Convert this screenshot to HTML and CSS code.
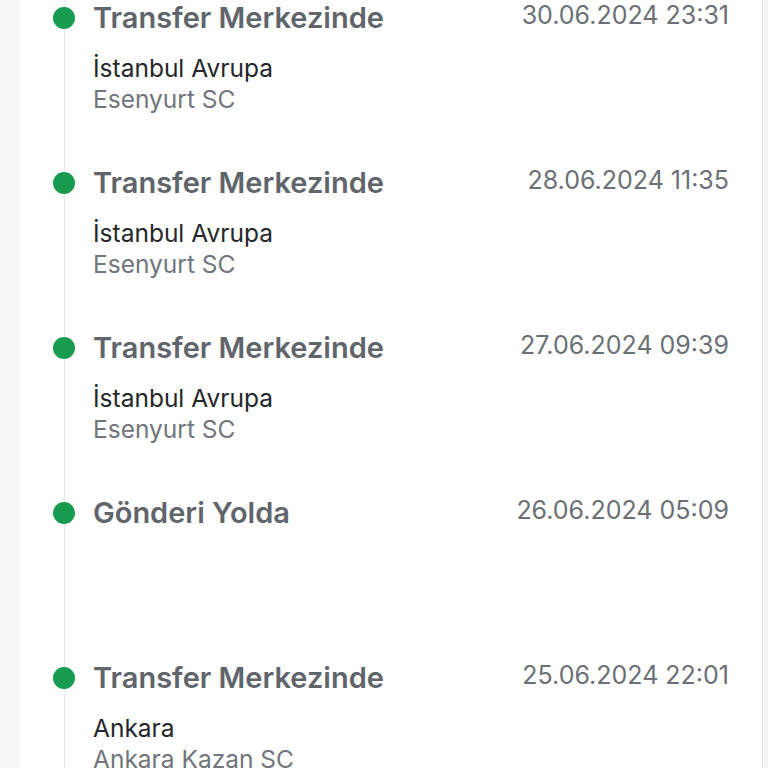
FILE: index.html
```html
<!DOCTYPE html>
<html lang="tr">
<head>
<meta charset="utf-8">
<title>Gönderi Hareketleri</title>
<link rel="stylesheet" href="styles.css">
</head>
<body>
<div class="page">
  <div class="gutter"></div>
  <main class="card">
    <ol class="timeline">
      <li class="event">
        <span class="dot"></span>
        <div class="body">
          <div class="head"><h3 class="status">Transfer Merkezinde</h3><time class="date">30.06.2024 23:31</time></div>
          <p class="city">İstanbul Avrupa</p>
          <p class="branch">Esenyurt SC</p>
        </div>
      </li>
      <li class="event">
        <span class="dot"></span>
        <div class="body">
          <div class="head"><h3 class="status">Transfer Merkezinde</h3><time class="date">28.06.2024 11:35</time></div>
          <p class="city">İstanbul Avrupa</p>
          <p class="branch">Esenyurt SC</p>
        </div>
      </li>
      <li class="event">
        <span class="dot"></span>
        <div class="body">
          <div class="head"><h3 class="status">Transfer Merkezinde</h3><time class="date">27.06.2024 09:39</time></div>
          <p class="city">İstanbul Avrupa</p>
          <p class="branch">Esenyurt SC</p>
        </div>
      </li>
      <li class="event">
        <span class="dot"></span>
        <div class="body">
          <div class="head"><h3 class="status">Gönderi Yolda</h3><time class="date">26.06.2024 05:09</time></div>
        </div>
      </li>
      <li class="event">
        <span class="dot"></span>
        <div class="body">
          <div class="head"><h3 class="status">Transfer Merkezinde</h3><time class="date">25.06.2024 22:01</time></div>
          <p class="city">Ankara</p>
          <p class="branch">Ankara Kazan SC</p>
        </div>
      </li>
    </ol>
  </main>
  <div class="gutter gutter-right"></div>
</div>
</body>
</html>
```

FILE: styles.css
```css
* { box-sizing: border-box; }
html, body { margin: 0; padding: 0; }
body {
  font-family: Inter, "Noto Sans", "Liberation Sans", sans-serif;
  background: #f4f5f7;
}
.page {
  display: flex;
  height: 768px;
  overflow: hidden;
}
.gutter {
  flex: 0 0 20px;
  background: #f4f5f7;
}
.gutter-right {
  flex: 1 1 auto;
}
.card {
  flex: 0 0 743px;
  background: #ffffff;
  border-right: 1px solid #e4e6e9;
  padding-right: 33px;
}
.timeline {
  list-style: none;
  margin: 0 0 0 44px;
  padding: 2px 0 0 0;
  border-left: 1px solid #e6e8eb;
  min-height: 100%;
}
.event {
  display: flex;
  align-items: flex-start;
  height: 165px;
  margin-left: -12px;
}
.dot {
  flex: 0 0 22px;
  width: 22px;
  height: 22px;
  margin-top: 5px;
  border-radius: 50%;
  background: #189b50;
}
.body {
  flex: 1 1 auto;
  margin-left: 18px;
}
.head {
  display: flex;
  justify-content: space-between;
  align-items: flex-start;
}
.status {
  margin: 0;
  font-size: 29px;
  line-height: 32px;
  font-weight: 600;
  color: #60646b;
}
.date {
  font-size: 25px;
  line-height: 27px;
  color: #6b6f76;
}
.city, .branch {
  margin: 0;
  font-size: 24.5px;
  line-height: 31px;
}
.city {
  margin-top: 19px;
  color: #25272b;
}
.branch {
  color: #71757c;
}
```
